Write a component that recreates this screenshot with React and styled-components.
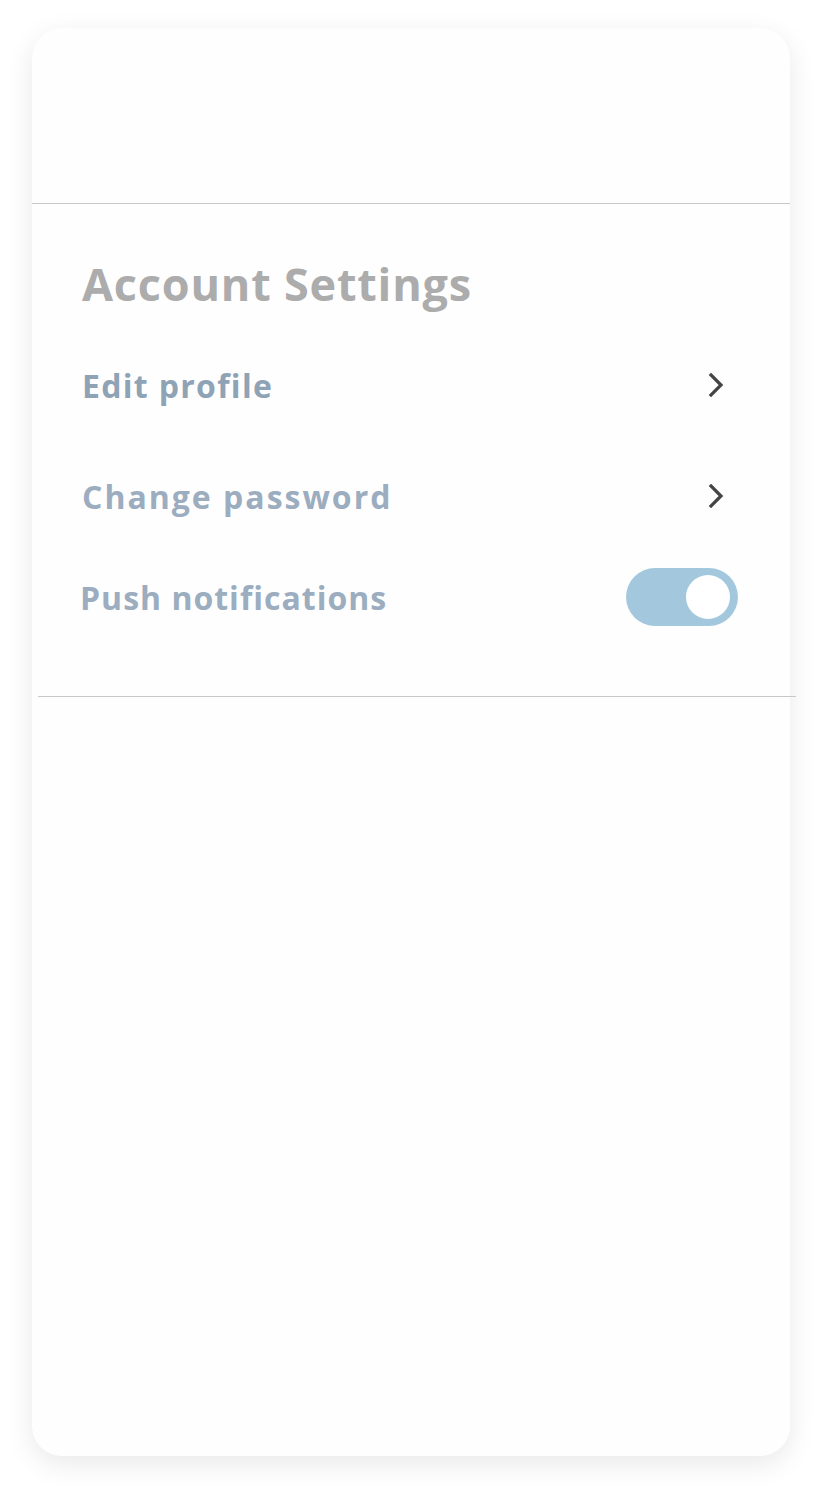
import React, { useState } from 'react';
import styled, { createGlobalStyle } from 'styled-components';

const GlobalStyle = createGlobalStyle`
  body {
    margin: 0;
    background: #ffffff;
    font-family: "Open Sans", Lato, sans-serif;
  }
`;

const Page = styled.div`
  padding: 28px 32px 36px 32px;
`;

const Card = styled.div`
  width: 758px;
  height: 1428px;
  background: #fefefe;
  border-radius: 30px;
  box-shadow: 0 8px 28px rgba(0, 0, 0, 0.09);
  display: flex;
  flex-direction: column;
`;

const Header = styled.div`
  height: 175px;
  border-bottom: 1px solid #c8c8c8;
`;

const Section = styled.div`
  padding: 52px 52px 0 50px;
`;

const Heading = styled.h1`
  margin: 0 0 18px 0;
  font-size: 45px;
  line-height: 56px;
  font-weight: 700;
  letter-spacing: 0.8px;
  color: #acacac;
`;

const Row = styled.div`
  display: flex;
  align-items: center;
  justify-content: space-between;
  height: ${({ height }) => height}px;
`;

const Label = styled.span`
  font-size: 32px;
  font-weight: 700;
  letter-spacing: ${({ spacing }) => spacing ?? 1.3}px;
  color: ${({ strong }) => (strong ? '#8fa3b6' : '#9badbf')};
  margin-left: ${({ shift }) => shift || 0}px;
`;

const ChevronButton = styled.button`
  border: none;
  background: none;
  padding: 0;
  margin-right: 10px;
  width: 24px;
  height: 24px;
  display: flex;
  align-items: center;
  justify-content: center;
  cursor: pointer;
`;

const Toggle = styled.button`
  width: 112px;
  height: 58px;
  border: none;
  border-radius: 29px;
  background: ${({ on }) => (on ? '#a3c8dd' : '#d5d9de')};
  padding: 7px 8px;
  display: flex;
  justify-content: ${({ on }) => (on ? 'flex-end' : 'flex-start')};
  cursor: pointer;
`;

const Knob = styled.span`
  width: 44px;
  height: 44px;
  border-radius: 50%;
  background: #ffffff;
`;

const Divider = styled.div`
  height: 1px;
  background: #c8c8c8;
  margin: 54px -6px 0 6px;
`;

const Chevron = () => (
  <svg width="16" height="24" viewBox="0 0 16 24" fill="none">
    <path d="M3 2 L13 12 L3 22" stroke="#444444" strokeWidth="3.2" strokeLinecap="square" />
  </svg>
);

export default function App() {
  const [push, setPush] = useState(true);
  return (
    <>
      <GlobalStyle />
      <Page>
        <Card>
          <Header />
          <Section>
            <Heading>Account Settings</Heading>
            <Row height={110}>
              <Label strong>Edit profile</Label>
              <ChevronButton aria-label="Edit profile">
                <Chevron />
              </ChevronButton>
            </Row>
            <Row height={112}>
              <Label spacing={2}>Change password</Label>
              <ChevronButton aria-label="Change password">
                <Chevron />
              </ChevronButton>
            </Row>
            <Row height={90}>
              <Label shift={-2} spacing={1}>Push notifications</Label>
              <Toggle on={push} onClick={() => setPush(!push)} aria-label="Push notifications">
                <Knob />
              </Toggle>
            </Row>
          </Section>
          <Divider />
        </Card>
      </Page>
    </>
  );
}
